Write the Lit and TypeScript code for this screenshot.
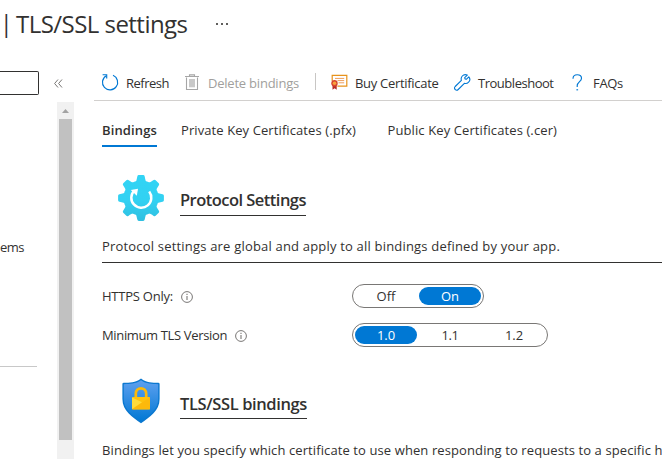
import { LitElement, html, css, svg } from "lit";
import { customElement, property } from "lit/decorators.js";

/** A single line of text, tracked so that it fills a given width. */
@customElement("fit-label")
class FitLabel extends LitElement {
  @property({ type: Number }) width = 0;
  @property() text = "";
  static styles = css`
    :host { display: block; flex: none; white-space: pre; }
    span { display: inline-block; }
  `;
  render() {
    return html`<span>${this.text}</span>`;
  }
  updated() {
    const span = this.renderRoot.querySelector("span")!;
    span.style.letterSpacing = "0px";
    const natural = span.getBoundingClientRect().width;
    span.style.letterSpacing = `${(this.width - natural) / this.text.length}px`;
    this.style.width = `${this.width}px`;
  }
}

const label = (text: string, width: number) =>
  html`<fit-label .text=${text} .width=${width}></fit-label>`;

const refreshIcon = html`<svg class="icon" width="18" height="18" viewBox="0 0 18 18" fill="none" stroke="#0078d4" stroke-width="1.15">
  <path d="M12 1.3A7.6 7.6 0 1 1 5.3 1.7"/><path d="M1.6.7H5.7V4.6"/></svg>`;
const trashIcon = html`<svg class="icon" width="14" height="18" viewBox="0 0 14 18">
  <path d="M1.5 3.5V15.5H12.5V3.5M0 2.5H14M4.5 2.5V.9H9.5V2.5" fill="none" stroke="#a6a6a6" stroke-width="1.1"/>
  <path d="M4 5H10V13.3H4Z" fill="#c8c8c8"/></svg>`;
const certIcon = html`<svg class="icon" width="17" height="17" viewBox="0 0 17 17">
  <path d="M1.2 7V1.4H15.8V12.1H6.4" fill="none" stroke="#e8931c" stroke-width="1.2"/>
  <path d="M4 4.4H13.2M6.5 6.6H13.2M7.5 8.8H13.2" stroke="#ee9d5c" stroke-width="1"/>
  <path d="M1.5 10.5H5.7V15.8L3.6 14.2 1.5 15.8Z" fill="#b92b27"/>
  <circle cx="3.5" cy="9.3" r="3.2" fill="#d8452c"/><circle cx="3.5" cy="9.3" r="1.8" fill="#f7a13b"/></svg>`;
const wrenchIcon = html`<svg class="icon" width="17" height="17" viewBox="0 0 17 17" fill="none" stroke="#0078d4" stroke-width="1.1" stroke-linejoin="round">
  <path d="M14.8 2.9 12.3 5.3 11 4.9 10.7 3.7 13.3 1.1C11.5.3 9.6.6 8.3 2 7.2 3.2 6.9 4.8 7.4 6.3L1.2 12.5C.4 13.4.4 14.7 1.2 15.5 2 16.4 3.3 16.4 4.2 15.5L10.4 9.3C11.8 9.8 13.5 9.3 14.6 8.2 16 6.8 16.2 4.6 14.8 2.9Z"/></svg>`;
const helpIcon = html`<svg class="icon" width="11" height="17" viewBox="0 0 11 17" fill="none" stroke="#0078d4" stroke-width="1.15">
  <path d="M1 4.7C1 2.2 2.7.7 5.2.7S9.5 2.1 9.5 4.2C9.5 7.6 5.2 7.7 5.2 11.8V13"/><path d="M4.4 15.8H6.1"/></svg>`;
const infoIcon = html`<svg class="icon" width="12" height="12" viewBox="0 0 12 12" fill="none" stroke="#797775">
  <circle cx="6" cy="6" r="5.4" stroke-width="1"/><path d="M6 5V9M6 2.8V4" stroke-width="1.1"/></svg>`;

const teeth = [0, 45, 90, 135, 180, 225, 270, 315];
const gearIcon = html`<svg class="hero" width="46" height="46" viewBox="0 0 46 46">
  <defs><linearGradient id="gear" gradientUnits="userSpaceOnUse" x1="0" y1="0" x2="0" y2="46">
    <stop offset="0" stop-color="#32d4f5"/><stop offset=".55" stop-color="#32d1f2"/><stop offset="1" stop-color="#2fbfe0"/></linearGradient>
    <mask id="gearShape"><rect width="46" height="46" fill="#000"/>
    <circle cx="23" cy="23" r="17.6" fill="#fff"/>
    ${teeth.map((a) => svg`<path transform=${`rotate(${a} 23 23)`} fill="#fff" d="M16 8.5C18.5 7 18.6 4.5 19.3 1.4Q19.6.1 20.8.1H25.2Q26.4.1 26.7 1.4C27.4 4.5 27.5 7 30 8.5Z"/>`)}</mask></defs>
  <rect width="46" height="46" fill="url(#gear)" mask="url(#gearShape)"/>
  <path d="M31.2 16.6A10 10 0 1 1 16.3 15.6" fill="none" stroke="#fff" stroke-width="2.5"/>
  <path d="M12.8 15.1 20 13.8 18.8 20.8Z" fill="#fff"/></svg>`;
const shieldIcon = html`<svg class="hero" width="40" height="46" viewBox="0 0 40 46">
  <defs><linearGradient id="shield" x1="0" y1="0" x2="0" y2="1"><stop offset="0" stop-color="#5ea0ef"/><stop offset="1" stop-color="#0078d4"/></linearGradient></defs>
  <path d="M20 .5C25.5 4.8 31.5 4.7 37.2 4.8Q38.6 4.8 38.6 6.1V21C38.6 33 28.5 38.8 20 45.3 11.5 38.8 1.4 33 1.4 21V6.1Q1.4 4.8 2.8 4.8C8.5 4.7 14.5 4.8 20 .5Z" fill="#0b78d0"/>
  <path d="M20 2.3C25.2 6 31 6.1 37.2 6.2V21C37.2 32 28 37.4 20 43.4 12 37.4 2.8 32 2.8 21V6.2C9 6.1 14.8 6 20 2.3Z" fill="url(#shield)"/>
  <path d="M14.8 20V15.5A5.2 5.2 0 0 1 25.2 15.5V20" fill="none" stroke="#fbb90b" stroke-width="2.7"/>
  <rect x="11" y="19" width="18" height="12.5" rx=".8" fill="#ffc20d"/>
  <path d="M11.2 31.3 28.9 19.3V31.3Z" fill="#fdb90b"/><path d="M11 19.5V31L21 24.3Z" fill="#ffdb3b"/></svg>`;

@customElement("app-root")
class AppRoot extends LitElement {
  static styles = css`
    :host { display: block; width: 662px; height: 459px; overflow: hidden; background: #fff; color: #323130;
      font: 13px/20px "Open Sans", "Noto Sans", sans-serif; }
    * { box-sizing: border-box; }
    .icon, .hero { display: block; flex: none; }
    .header { display: flex; height: 71px; padding: 8px 0 0 0; font-size: 24px; line-height: 32px; }
    .bar { width: 16px; flex: none; font-size: 23px; line-height: 30px; }
    .dots { display: flex; gap: 3px; padding: 15px 0 0 28px; }
    .dots i { width: 2px; height: 2px; background: #605e5c; }
    .body { display: flex; height: 388px; }
    .side { width: 57px; flex: none; }
    .search-row { display: flex; height: 24px; gap: 15px; }
    .search { width: 39px; flex: none; border: 1px solid #323130; border-left: 0; border-radius: 0 2px 2px 0; }
    .search-row svg { margin-top: 8px; flex: none; }
    .side-item { margin-top: 142px; height: 20px; }
    .rule { width: 37px; height: 1px; margin-top: 109px; background: #c8c8c8; }
    .scroll { width: 17px; margin: 31px 20px 0 0; flex: none; background: #f1f1f1; padding: 0 2px; }
    .arrow { display: block; height: 17px; width: 13px; }
    .thumb { height: 321px; background: #c1c1c1; }
    .main { width: 568px; flex: none; }
    .toolbar { display: flex; height: 30px; padding: 2px 0 0 7px; border-bottom: 1px solid #d2d0ce; }
    .cmd { display: flex; flex: none; }
    .cmd:nth-child(1) { gap: 7px; width: 84px; }
    .cmd .icon { margin-top: 1px; }
    .cmd.off { color: #a19f9d; gap: 9px; width: 130px; }
    .sep { width: 1px; height: 17px; background: #c8c6c4; margin-right: 15px; }
    .buy { gap: 7px; width: 123px; }
    .fix { gap: 7px; width: 118px; }
    .faq { gap: 10px; }
    .tabs { display: flex; gap: 24px; height: 46px; padding: 19px 0 0 8px; }
    .tab.on { font-weight: 600; border-bottom: 2px solid #0078d4; height: 27px; }
    .tab:last-child { margin-left: 7.5px; }
    .content { padding-left: 8px; }
    .section { display: flex; height: 46px; margin-top: 28px; }
    .hero { margin-left: 16px; }
    .section.tls .hero { margin: 0 3px 0 19px; }
    .section.tls svg { position: relative; top: -1px; }
    .title { margin: 13px 0 0 16px; font-size: 16.5px; line-height: 24px; font-weight: 600; height: 28px; border-bottom: 1px solid #323130; }
    .desc { height: 42px; padding-top: 15px; border-bottom: 1px solid #323130; }
    .field { display: flex; height: 24px; margin-top: 21px; }
    .field + .field { margin-top: 15px; }
    .name { display: flex; width: 250px; padding-top: 2px; gap: 8px; }
    .name .icon { margin-top: 5px; }
    .switch { display: flex; gap: 2px; padding: 2px; border: 1px solid #797775; border-radius: 12px; height: 24px; }
    .opt { width: 62px; height: 18px; border-radius: 9px; line-height: 18px; display: flex; justify-content: center; }
    .opt.on { background: #0078d4; color: #fff; font-weight: 500; }
    .section.tls { margin-top: 32px; height: 46px; }
    .section.tls .title { margin-top: 12px; line-height: 26px; }
    .last { padding-top: 15px; }
  `;
  render() {
    return html`
      <div class="header"><div class="bar">|</div>${label("TLS/SSL settings", 171.5)}<div class="dots"><i></i><i></i><i></i></div></div>
      <div class="body">
        <div class="side">
          <div class="search-row"><div class="search"></div>
            <svg width="9" height="9" viewBox="0 0 9 9" fill="none" stroke="#797775"><path d="M4 .5.6 4.5 4 8.5M8 .5 4.6 4.5 8 8.5"/></svg></div>
          <div class="side-item">${label("ems", 24)}</div>
          <div class="rule"></div>
        </div>
        <div class="scroll">
          <svg class="arrow" viewBox="0 0 13 17"><path d="M3 11 6.5 7 10 11Z" fill="#a3a3a3"/></svg>
          <div class="thumb"></div>
        </div>
        <div class="main">
          <div class="toolbar">
            <div class="cmd">${refreshIcon}${label("Refresh", 43)}</div>
            <div class="cmd off">${trashIcon}${label("Delete bindings", 91)}</div>
            <div class="sep"></div>
            <div class="cmd buy">${certIcon}${label("Buy Certificate", 83.5)}</div>
            <div class="cmd fix">${wrenchIcon}${label("Troubleshoot", 75.5)}</div>
            <div class="cmd faq">${helpIcon}${label("FAQs", 30)}</div>
          </div>
          <div class="tabs">
            <div class="tab on">${label("Bindings", 55)}</div>
            <div class="tab">${label("Private Key Certificates (.pfx)", 175)}</div>
            <div class="tab">${label("Public Key Certificates (.cer)", 169.5)}</div>
          </div>
          <div class="content">
            <div class="section">${gearIcon}<div class="title">${label("Protocol Settings", 126)}</div></div>
            <div class="desc">${label("Protocol settings are global and apply to all bindings defined by your app.", 458)}</div>
            <div class="field"><div class="name">${label("HTTPS Only:", 71)}${infoIcon}</div>
              <div class="switch"><div class="opt">${label("Off", 19)}</div><div class="opt on">${label("On", 18)}</div></div></div>
            <div class="field"><div class="name">${label("Minimum TLS Version", 125)}${infoIcon}</div>
              <div class="switch"><div class="opt on">${label("1.0", 18)}</div><div class="opt">${label("1.1", 17)}</div><div class="opt">${label("1.2", 18)}</div></div></div>
            <div class="section tls">${shieldIcon}<div class="title">${label("TLS/SSL bindings", 127)}</div></div>
            <div class="last">${label("Bindings let you specify which certificate to use when responding to requests to a specific hostname.", 618)}</div>
          </div>
        </div>
      </div>`;
  }
}
